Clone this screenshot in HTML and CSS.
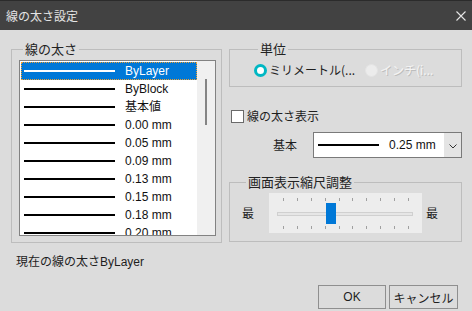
FILE: index.html
```html
<!DOCTYPE html>
<html lang="ja">
<head>
<meta charset="utf-8">
<title>線の太さ設定</title>
<link rel="stylesheet" href="styles.css">
</head>
<body>
<div class="dialog">
  <header class="titlebar">
    <span class="title">線の太さ設定</span>
    <svg class="close" width="10" height="10" viewBox="0 0 10 10"><path d="M0.5 0.5L9.5 9.5M9.5 0.5L0.5 9.5" stroke="#e6e6e6" stroke-width="1.1" fill="none"/></svg>
  </header>
  <main class="content">
    <div class="columns">
      <fieldset class="group group-weights">
        <legend>線の太さ</legend>
        <div class="listbox">
          <ul class="items">
            <li class="item selected"><span class="sample"></span><span class="label">ByLayer</span></li>
            <li class="item"><span class="sample"></span><span class="label">ByBlock</span></li>
            <li class="item"><span class="sample"></span><span class="label">基本値</span></li>
            <li class="item"><span class="sample"></span><span class="label">0.00 mm</span></li>
            <li class="item"><span class="sample"></span><span class="label">0.05 mm</span></li>
            <li class="item"><span class="sample"></span><span class="label">0.09 mm</span></li>
            <li class="item"><span class="sample"></span><span class="label">0.13 mm</span></li>
            <li class="item"><span class="sample"></span><span class="label">0.15 mm</span></li>
            <li class="item"><span class="sample"></span><span class="label">0.18 mm</span></li>
            <li class="item"><span class="sample"></span><span class="label">0.20 mm</span></li>
          </ul>
          <div class="scrollbar"><div class="thumb"></div></div>
        </div>
      </fieldset>
      <div class="right">
        <fieldset class="group group-units">
          <legend>単位</legend>
          <div class="radios">
            <label class="radio checked"><span class="dot"></span><span>ミリメートル(...</span></label>
            <label class="radio disabled"><span class="dot"></span><span>インチ(i...</span></label>
          </div>
        </fieldset>
        <label class="check"><span class="box"></span><span>線の太さ表示</span></label>
        <div class="default-row">
          <span class="default-label">基本</span>
          <div class="combo">
            <span class="sample"></span>
            <span class="value">0.25 mm</span>
            <span class="drop"><svg width="8" height="5" viewBox="0 0 8 5"><path d="M0.5 0.5L4 4L7.5 0.5" stroke="#333" stroke-width="1" fill="none"/></svg></span>
          </div>
        </div>
        <fieldset class="group group-scale">
          <legend>画面表示縮尺調整</legend>
          <div class="scale-row">
            <span class="scale-label">最</span>
            <svg class="slider" width="153" height="40" viewBox="0 0 153 40">
              <rect x="0" y="0" width="153" height="40" fill="#ededed"/>
              <g stroke="#a0a0a0" stroke-width="1">
                <path d="M14.5 5v3M28.5 5v3M42.5 5v3M56.5 5v3M70.5 5v3M83.5 5v3M97.5 5v3M111.5 5v3M125.5 5v3M139.5 5v3"/>
                <path d="M14.5 33v3M28.5 33v3M42.5 33v3M56.5 33v3M70.5 33v3M83.5 33v3M97.5 33v3M111.5 33v3M125.5 33v3M139.5 33v3"/>
              </g>
              <rect x="8.5" y="19.5" width="135" height="3" fill="#e6e6e6" stroke="#d0d0d0"/>
              <rect x="57" y="10" width="10" height="21" fill="#0078d7"/>
            </svg>
            <span class="scale-label">最</span>
          </div>
        </fieldset>
      </div>
    </div>
    <p class="status">現在の線の太さByLayer</p>
    <div class="buttons">
      <button class="btn btn-ok">OK</button>
      <button class="btn btn-cancel">キャンセル</button>
    </div>
  </main>
</div>
</body>
</html>
```
FILE: styles.css
```css
html, body {
  margin: 0;
  padding: 0;
}
body {
  width: 472px;
  height: 311px;
  overflow: hidden;
  background: #dcdcdc;
  font-family: "Liberation Sans", "Noto Sans CJK JP", sans-serif;
  font-size: 12px;
  color: #1e1e1e;
}
.titlebar {
  box-sizing: border-box;
  height: 30px;
  border-top: 1px solid #2b2b2b;
  background: #424242;
  display: flex;
  align-items: center;
  justify-content: space-between;
  padding: 0 6px;
}
.title {
  color: #e4e4e4;
  font-family: "Noto Sans CJK JP", sans-serif;
  font-size: 12px;
  line-height: 16px;
}
.close {
  display: block;
}
.content {
  padding: 10px 0 0 11px;
}
.columns {
  display: flex;
  gap: 7px;
}
.group {
  margin: 0;
  border: 1px solid #bdbdbd;
  min-width: 0;
  box-sizing: border-box;
}
.group legend {
  font-family: "Noto Sans CJK JP", sans-serif;
  font-size: 13px;
  line-height: 18px;
  color: #222;
  padding: 0 2px;
  margin-left: 4px;
}
.group-weights {
  width: 211px;
  padding: 2px 5px 6px 7px;
}
.listbox {
  box-sizing: border-box;
  width: 197px;
  height: 176px;
  border: 1px solid #828282;
  background: #fff;
  display: flex;
}
.items {
  list-style: none;
  margin: 0;
  padding: 1px 0 0 1px;
  width: 177px;
  box-sizing: border-box;
  overflow: hidden;
}
.item {
  height: 18px;
  display: flex;
  align-items: center;
  color: #111;
  font-size: 12px;
  line-height: 18px;
}
.item .sample {
  width: 91px;
  height: 2px;
  background: #000;
  margin: 0 10px 0 3px;
  flex: none;
}
.item.selected {
  background: #0078d7;
  color: #fff;
  outline: 1px dotted #f0a030;
  outline-offset: -1px;
}
.item.selected .sample {
  background: #fff;
}
.scrollbar {
  width: 18px;
  background: #f0f0f0;
  padding-top: 18px;
  box-sizing: border-box;
}
.thumb {
  width: 2px;
  height: 46px;
  margin-left: 8px;
  background: #858585;
}
.right {
  width: 233px;
  display: flex;
  flex-direction: column;
}
.group-units {
  padding: 4px 0 8px 24px;
}
.radios {
  display: flex;
  align-items: center;
  height: 16px;
  font-family: "Noto Sans CJK JP", sans-serif;
}
.radio {
  display: flex;
  align-items: center;
  line-height: 16px;
  white-space: nowrap;
}
.radio.checked {
  width: 111px;
  color: #1e1e1e;
}
.radio .dot {
  box-sizing: border-box;
  width: 13px;
  height: 13px;
  border-radius: 50%;
  margin-right: 2px;
  flex: none;
}
.radio.checked .dot {
  border: 3px solid #00b7c3;
  background: #fff;
}
.radio.disabled .dot {
  border: 1px solid #e4e4e4;
  background: #ececec;
}
.radio.disabled {
  color: #f4f4f4;
  text-shadow: 1px 1px 0 #bdbdbd;
}
.check {
  display: flex;
  align-items: center;
  height: 16px;
  margin: 21px 0 0 2px;
  font-family: "Noto Sans CJK JP", sans-serif;
  line-height: 16px;
}
.check .box {
  box-sizing: border-box;
  width: 13px;
  height: 13px;
  border: 1px solid #6a6a6a;
  background: #fff;
  margin-right: 3px;
}
.default-row {
  display: flex;
  align-items: center;
  margin-top: 8px;
  padding-left: 44px;
}
.default-label {
  width: 40px;
  font-family: "Noto Sans CJK JP", sans-serif;
  line-height: 16px;
}
.combo {
  box-sizing: border-box;
  width: 149px;
  height: 26px;
  border: 1px solid #7a7a7a;
  background: #fff;
  display: flex;
  align-items: center;
  padding-left: 4px;
}
.combo .sample {
  width: 61px;
  height: 2px;
  background: #000;
  margin-right: 10px;
}
.combo .value {
  font-size: 12px;
  color: #111;
}
.drop {
  margin-left: auto;
  width: 17px;
  height: 24px;
  background: #e4e4e4;
  display: flex;
  align-items: center;
  justify-content: center;
}
.drop svg {
  display: block;
  margin-top: 2px;
}
.group-scale {
  margin-top: 15px;
  padding: 2px 0 8px 12px;
}
.scale-row {
  display: flex;
  align-items: center;
  height: 40px;
}
.scale-label {
  font-family: "Noto Sans CJK JP", sans-serif;
  font-size: 12px;
  line-height: 16px;
  width: 12px;
}
.slider {
  display: block;
  margin: 0 4px 0 15px;
}
.status {
  margin: 11px 0 0 5px;
  font-size: 12px;
  line-height: 16px;
  color: #1e1e1e;
}
.buttons {
  display: flex;
  justify-content: flex-end;
  gap: 3px;
  margin-top: 15px;
  padding-right: 14px;
}
.btn {
  box-sizing: border-box;
  height: 24px;
  border: 1px solid #8f8f8f;
  background: #dcdcdc;
  font-family: "Liberation Sans", "Noto Sans CJK JP", sans-serif;
  font-size: 12px;
  color: #1e1e1e;
  padding: 0;
}
.btn-ok {
  width: 68px;
}
.btn-cancel {
  width: 69px;
}
```
